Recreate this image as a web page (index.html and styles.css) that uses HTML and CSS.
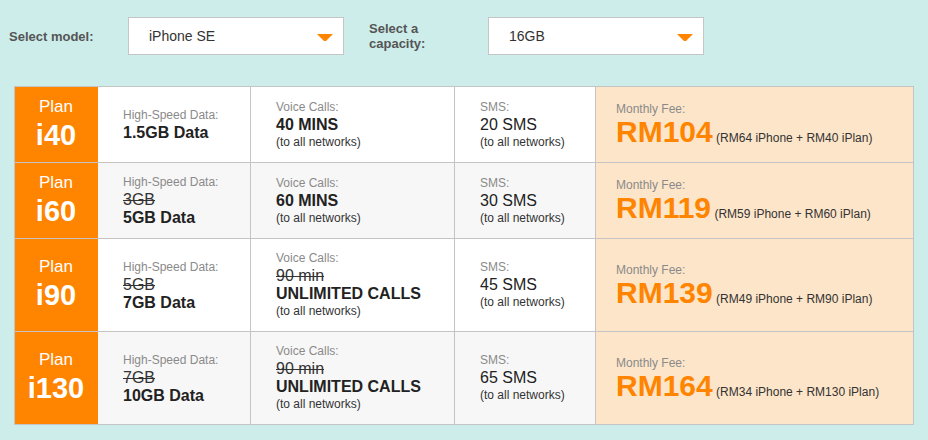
FILE: index.html
```html
<!DOCTYPE html>
<html lang="en">
<head>
<meta charset="utf-8">
<title>iPhone plans</title>
<link rel="stylesheet" href="styles.css">
</head>
<body>
<div class="filters">
  <div class="field">
    <label class="field-label">Select model:</label>
    <div class="select"><span>iPhone SE</span><svg class="caret" width="16" height="7" viewBox="0 0 16 7"><polygon points="0,0 16,0 9,7 7,7" fill="#ff8400"/></svg></div>
  </div>
  <div class="field">
    <label class="field-label">Select a capacity:</label>
    <div class="select"><span>16GB</span><svg class="caret" width="16" height="7" viewBox="0 0 16 7"><polygon points="0,0 16,0 9,7 7,7" fill="#ff8400"/></svg></div>
  </div>
</div>

<div class="plans">
  <!-- Row 1 -->
  <div class="cell plan"><div class="plan-word">Plan</div><div class="plan-name">i40</div></div>
  <div class="cell"><div class="lbl">High-Speed Data:</div><div class="val">1.5GB Data</div></div>
  <div class="cell"><div class="lbl">Voice Calls:</div><div class="val">40 MINS</div><div class="note">(to all networks)</div></div>
  <div class="cell"><div class="lbl">SMS:</div><div class="reg">20 SMS</div><div class="note">(to all networks)</div></div>
  <div class="cell fee"><div class="lbl">Monthly Fee:</div><div class="fee-line"><b class="price">RM104</b> (RM64 iPhone + RM40 iPlan)</div></div>

  <!-- Row 2 -->
  <div class="cell plan"><div class="plan-word">Plan</div><div class="plan-name">i60</div></div>
  <div class="cell alt"><div class="lbl">High-Speed Data:</div><div class="old">3GB</div><div class="val">5GB Data</div></div>
  <div class="cell alt"><div class="lbl">Voice Calls:</div><div class="val">60 MINS</div><div class="note">(to all networks)</div></div>
  <div class="cell alt"><div class="lbl">SMS:</div><div class="reg">30 SMS</div><div class="note">(to all networks)</div></div>
  <div class="cell fee"><div class="lbl">Monthly Fee:</div><div class="fee-line"><b class="price">RM119</b> (RM59 iPhone + RM60 iPlan)</div></div>

  <!-- Row 3 -->
  <div class="cell plan"><div class="plan-word">Plan</div><div class="plan-name">i90</div></div>
  <div class="cell"><div class="lbl">High-Speed Data:</div><div class="old">5GB</div><div class="val">7GB Data</div></div>
  <div class="cell"><div class="lbl">Voice Calls:</div><div class="old">90 min</div><div class="val">UNLIMITED CALLS</div><div class="note">(to all networks)</div></div>
  <div class="cell"><div class="lbl">SMS:</div><div class="reg">45 SMS</div><div class="note">(to all networks)</div></div>
  <div class="cell fee"><div class="lbl">Monthly Fee:</div><div class="fee-line"><b class="price">RM139</b> (RM49 iPhone + RM90 iPlan)</div></div>

  <!-- Row 4 -->
  <div class="cell plan"><div class="plan-word">Plan</div><div class="plan-name">i130</div></div>
  <div class="cell alt"><div class="lbl">High-Speed Data:</div><div class="old">7GB</div><div class="val">10GB Data</div></div>
  <div class="cell alt"><div class="lbl">Voice Calls:</div><div class="old">90 min</div><div class="val">UNLIMITED CALLS</div><div class="note">(to all networks)</div></div>
  <div class="cell alt"><div class="lbl">SMS:</div><div class="reg">65 SMS</div><div class="note">(to all networks)</div></div>
  <div class="cell fee"><div class="lbl">Monthly Fee:</div><div class="fee-line"><b class="price">RM164</b> (RM34 iPhone + RM130 iPlan)</div></div>
</div>
</body>
</html>
```

FILE: styles.css
```css
html, body {
  margin: 0;
  padding: 0;
  background: #cdedea;
  font-family: "Liberation Sans", Arial, Helvetica, sans-serif;
  color: #222;
}

.filters {
  display: flex;
  align-items: center;
  gap: 25px;
  padding: 17px 0 0 9px;
  height: 38px;
}

.field {
  display: flex;
  align-items: center;
}

.field-label {
  width: 104px;
  margin-right: 15px;
  font-size: 13px;
  font-weight: bold;
  line-height: 15px;
  color: #555;
}

.select {
  box-sizing: border-box;
  width: 216px;
  height: 38px;
  background: #fff;
  border: 1px solid #c6c6c6;
  padding: 0 10px 0 20px;
  display: flex;
  align-items: center;
  justify-content: space-between;
  font-size: 14px;
  color: #333;
}

.caret {
  display: block;
  margin-top: 2px;
}

.plans {
  margin: 31px 0 0 14px;
  width: 900px;
  box-sizing: border-box;
  display: grid;
  grid-template-columns: 82px 152px 203px 140px 317px;
  grid-template-rows: 75px 75px 92px 92px;
  gap: 1px;
  padding: 1px;
  background: #c4c4c4;
}

.cell {
  background: #fff;
  display: flex;
  flex-direction: column;
  justify-content: center;
  padding-left: 25px;
}

.cell.alt {
  background: #f7f7f7;
}

.cell.plan {
  background: #ff8400;
  padding-left: 0;
  align-items: center;
  color: #fff;
  box-shadow: 1px 0 0 #ff8400;
}

.plan-word {
  font-size: 17px;
  line-height: 20px;
}

.plan-name {
  font-size: 29px;
  font-weight: bold;
  line-height: 36px;
}

.lbl {
  font-size: 12px;
  line-height: 17px;
  color: #8a8a8a;
}

.val {
  font-size: 16px;
  font-weight: bold;
  line-height: 18px;
  color: #222;
}

.reg {
  font-size: 16px;
  line-height: 18px;
  color: #222;
}

.old {
  font-size: 16px;
  line-height: 18px;
  color: #333;
  text-decoration: line-through;
}

.note {
  font-size: 12px;
  line-height: 17px;
  color: #333;
}

.cell.fee {
  background: #fde5c9;
  padding-left: 20px;
}

.fee-line {
  font-size: 12px;
  line-height: 12px;
  color: #333;
  margin-bottom: 2px;
}

.price {
  font-size: 30px;
  line-height: 28px;
  font-weight: bold;
  color: #ff8400;
}
```
